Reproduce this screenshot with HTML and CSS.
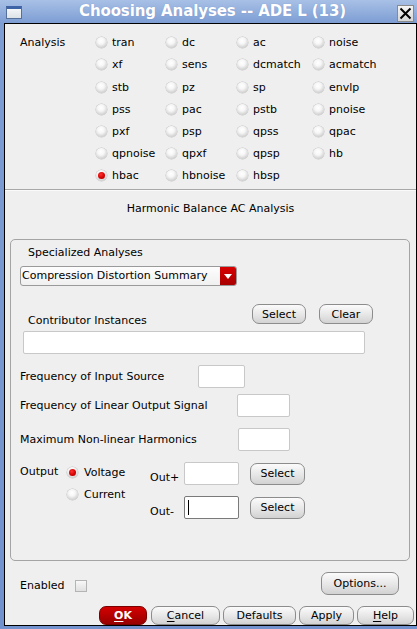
FILE: index.html
```html
<!DOCTYPE html>
<html>
<head>
<meta charset="utf-8">
<link rel="stylesheet" href="styles.css">
</head>
<body>
<div class="window">
  <div class="titlebar">
    <span class="winicon"></span>
    <span class="title">Choosing Analyses -- ADE L (13)</span>
    <span class="close"><svg width="15" height="15" viewBox="0 0 15 15"><path d="M2.5 2.5 L12.5 12.5 M12.5 2.5 L2.5 12.5" stroke="#000" stroke-width="2" fill="none"/></svg></span>
  </div>
  <div class="frame">
    <div class="analysis">
      <div class="alabel">Analysis</div>
      <div class="radio-grid">
        <label class="opt"><span class="radio"></span>tran</label>
        <label class="opt"><span class="radio"></span>dc</label>
        <label class="opt"><span class="radio"></span>ac</label>
        <label class="opt"><span class="radio"></span>noise</label>
        <label class="opt"><span class="radio"></span>xf</label>
        <label class="opt"><span class="radio"></span>sens</label>
        <label class="opt"><span class="radio"></span>dcmatch</label>
        <label class="opt"><span class="radio"></span>acmatch</label>
        <label class="opt"><span class="radio"></span>stb</label>
        <label class="opt"><span class="radio"></span>pz</label>
        <label class="opt"><span class="radio"></span>sp</label>
        <label class="opt"><span class="radio"></span>envlp</label>
        <label class="opt"><span class="radio"></span>pss</label>
        <label class="opt"><span class="radio"></span>pac</label>
        <label class="opt"><span class="radio"></span>pstb</label>
        <label class="opt"><span class="radio"></span>pnoise</label>
        <label class="opt"><span class="radio"></span>pxf</label>
        <label class="opt"><span class="radio"></span>psp</label>
        <label class="opt"><span class="radio"></span>qpss</label>
        <label class="opt"><span class="radio"></span>qpac</label>
        <label class="opt"><span class="radio"></span>qpnoise</label>
        <label class="opt"><span class="radio"></span>qpxf</label>
        <label class="opt"><span class="radio"></span>qpsp</label>
        <label class="opt"><span class="radio"></span>hb</label>
        <label class="opt"><span class="radio on"></span>hbac</label>
        <label class="opt"><span class="radio"></span>hbnoise</label>
        <label class="opt"><span class="radio"></span>hbsp</label>
      </div>
    </div>
    <div class="sep"></div>
    <div class="heading">Harmonic Balance AC Analysis</div>
    <div class="group">
      <div class="spec-label">Specialized Analyses</div>
      <div class="combo"><span class="combo-text">Compression Distortion Summary</span><span class="combo-btn"><svg width="8" height="5" viewBox="0 0 8 5"><path d="M0 0 H8 L4 5 Z" fill="#fff"/></svg></span></div>
      <div class="contrib-row">
        <span class="contrib-label">Contributor Instances</span>
        <span class="btn btn-select1">Select</span>
        <span class="btn btn-clear">Clear</span>
      </div>
      <div class="field field-contrib"></div>
      <div class="frow frow-1"><span class="flabel">Frequency of Input Source</span><span class="field f1"></span></div>
      <div class="frow frow-2"><span class="flabel">Frequency of Linear Output Signal</span><span class="field f2"></span></div>
      <div class="frow frow-3"><span class="flabel">Maximum Non-linear Harmonics</span><span class="field f3"></span></div>
      <div class="output">
        <span class="olabel">Output</span>
        <div class="ocol">
          <label class="opt2"><span class="radio on"></span>Voltage</label>
          <label class="opt2"><span class="radio"></span>Current</label>
        </div>
        <div class="outs">
          <div class="outrow outrow-1"><span class="outlabel">Out+</span><span class="field fo"></span><span class="btn btn-sel">Select</span></div>
          <div class="outrow outrow-2"><span class="outlabel">Out-</span><span class="field fo focus"><span class="caret"></span></span><span class="btn btn-sel">Select</span></div>
        </div>
      </div>
    </div>
    <div class="enabled-row">
      <span class="enlabel">Enabled</span>
      <span class="check"></span>
      <span class="btn btn-options">Options...</span>
    </div>
    <div class="bottom">
      <span class="btn btn-ok"><u>O</u>K</span>
      <span class="btn btn-cancel"><u>C</u>ancel</span>
      <span class="btn btn-defaults">Defaults</span>
      <span class="btn btn-apply">Apply</span>
      <span class="btn btn-help"><u>H</u>elp</span>
    </div>
  </div>
</div>
</body>
</html>
```

FILE: styles.css
```css
* { box-sizing: border-box; }
html, body { margin: 0; padding: 0; }
body {
  width: 417px;
  height: 629px;
  overflow: hidden;
  background: #6c8ccb;
  font-family: "DejaVu Sans", sans-serif;
  font-size: 11px;
  color: #000;
}
.window {
  width: 417px;
  height: 629px;
  display: flex;
  flex-direction: column;
  background: linear-gradient(#a8c0e6 0px, #7d9dd3 23px, #7192cd 100%);
  padding: 0 0 3px 4px;
}
.titlebar {
  height: 23px;
  display: flex;
  align-items: center;
  position: relative;
}
.winicon {
  position: absolute;
  left: 2px;
  top: 6px;
  width: 16px;
  height: 13px;
  border: 1px solid #56709c;
  border-top: 3px solid #3f64a6;
  background: linear-gradient(#f4f6f8, #dde2e6);
}
.title {
  flex: 1;
  text-align: center;
  font-weight: bold;
  font-size: 15px;
  color: #fff;
  letter-spacing: -0.1px;
  padding-left: 4px;
  text-shadow: 0 0 1px #6f8fc5;
}
.close {
  position: absolute;
  right: 3px;
  top: 5px;
  width: 17px;
  height: 17px;
  border: 1px solid #8a8a8a;
  background: linear-gradient(#f4f4f4, #d6d6d6);
  display: flex;
  align-items: center;
  justify-content: center;
}
.frame {
  flex: 1;
  background: #efefef;
  border: 1px solid #000;
  display: flex;
  flex-direction: column;
}
.analysis {
  display: flex;
  padding: 8px 0 0 15px;
}
.alabel {
  width: 76px;
  height: 22px;
  line-height: 22px;
}
.radio-grid {
  display: grid;
  grid-template-columns: 70px 71px 76px 80px;
  grid-auto-rows: 22.2px;
}
.opt {
  display: flex;
  align-items: center;
  gap: 5px;
  white-space: nowrap;
}
.radio {
  width: 11px;
  height: 11px;
  border-radius: 50%;
  flex: none;
  background: radial-gradient(circle at 45% 35%, #ffffff 0, #f6f6f6 35%, #cfcfcf 75%, #a9a9a9 100%);
  box-shadow: 0 0 0 0.5px #c4c4c4;
  position: relative;
}
.radio.on::after {
  content: "";
  position: absolute;
  left: 2px;
  top: 2px;
  width: 7px;
  height: 7px;
  border-radius: 50%;
  background: radial-gradient(circle at 40% 35%, #ff3030 0, #d00000 60%, #a00000 100%);
}
.sep {
  height: 1px;
  background: #a8a8a8;
  margin-top: 2px;
  border-bottom: 1px solid #fafafa;
  box-sizing: content-box;
}
.heading {
  text-align: center;
  line-height: 16px;
  margin-top: 10px;
}
.group {
  margin: 22px 6px 0 5px;
  height: 322px;
  border: 1px solid #a4a4a4;
  border-radius: 5px;
  padding: 0 0 0 9px;
  display: flex;
  flex-direction: column;
}
.spec-label {
  line-height: 16px;
  margin: 5px 0 0 8px;
}
.combo {
  margin-top: 5px;
  width: 217px;
  height: 20px;
  display: flex;
  border: 1px solid #9a9a9a;
  border-radius: 3px;
  background: linear-gradient(#fdfdfd, #f0f0f0);
  overflow: hidden;
}
.combo-text {
  flex: 1;
  line-height: 18px;
  padding-left: 1px;
  white-space: nowrap;
}
.combo-btn {
  width: 16px;
  background: linear-gradient(#d80000, #a80000);
  display: flex;
  align-items: center;
  justify-content: center;
}
.contrib-row {
  display: flex;
  align-items: flex-start;
  margin-top: 18px;
  height: 26px;
}
.contrib-label {
  margin: 9px 0 0 8px;
  line-height: 16px;
  width: 224px;
}
.btn {
  display: inline-flex;
  align-items: center;
  justify-content: center;
  border: 1px solid #8c8c8c;
  border-radius: 7px;
  background: linear-gradient(#fbfbfb, #e6e6e6 55%, #d2d2d2);
  height: 20px;
  white-space: nowrap;
}
.btn u { text-decoration: underline; text-underline-offset: 2px; }
.btn-select1 { width: 54px; }
.btn-clear { width: 54px; margin-left: 13px; }
.field {
  display: block;
  background: #fff;
  border: 1px solid #c8c8c8;
  border-radius: 2px;
  height: 23px;
}
.field-contrib {
  margin: 1px 0 0 3px;
  width: 342px;
}
.frow {
  display: flex;
  align-items: center;
  height: 23px;
}
.frow-1 { margin-top: 11px; }
.frow-2 { margin-top: 6px; }
.frow-3 { margin-top: 11px; }
.flabel { white-space: nowrap; }
.frow-1 .flabel { width: 178px; }
.frow-2 .flabel { width: 217px; }
.frow-3 .flabel { width: 218px; }
.f1 { width: 47px; }
.f2 { width: 53px; }
.f3 { width: 52px; }
.output {
  display: flex;
  margin-top: 11px;
}
.olabel {
  width: 47px;
  line-height: 16px;
  margin-top: 2px;
}
.ocol {
  display: flex;
  flex-direction: column;
  width: 83px;
}
.opt2 {
  display: flex;
  align-items: center;
  gap: 6px;
  height: 16px;
  margin-top: 2px;
}
.opt2 + .opt2 { margin-top: 6px; }
.outs { display: flex; flex-direction: column; }
.outrow { display: flex; align-items: center; height: 23px; }
.outrow-2 { margin-top: 11px; }
.outlabel { width: 34px; margin-top: 9px; line-height: 16px; }
.fo { width: 55px; }
.fo.focus { border-color: #7a7a7a; position: relative; }
.caret {
  position: absolute;
  left: 3px;
  top: 3px;
  width: 1px;
  height: 15px;
  background: #000;
}
.btn-sel { width: 55px; margin-left: 11px; height: 22px; }
.enabled-row {
  display: flex;
  align-items: center;
  margin-top: 10px;
  padding-left: 15px;
  height: 24px;
}
.enlabel { width: 55px; line-height: 16px; margin-top: 5px; }
.check {
  width: 12px;
  height: 12px;
  border: 1px solid #b4b4b4;
  background: linear-gradient(#f8f8f8, #e0e0e0);
  margin-top: 5px;
}
.btn-options {
  margin-left: auto;
  margin-right: 17px;
  width: 78px;
  height: 23px;
}
.bottom {
  display: flex;
  justify-content: flex-end;
  gap: 3px;
  margin-top: 11px;
  padding-right: 2px;
}
.bottom .btn { height: 19px; }
.btn-ok {
  width: 48px;
  background: linear-gradient(#d40000, #b00000 60%, #980000);
  border-color: #7a0000;
  color: #fff;
  font-weight: bold;
  margin-right: 1px;
}
.btn-cancel { width: 69px; }
.btn-defaults { width: 73px; }
.btn-apply { width: 55px; }
.btn-help { width: 57px; }
```
